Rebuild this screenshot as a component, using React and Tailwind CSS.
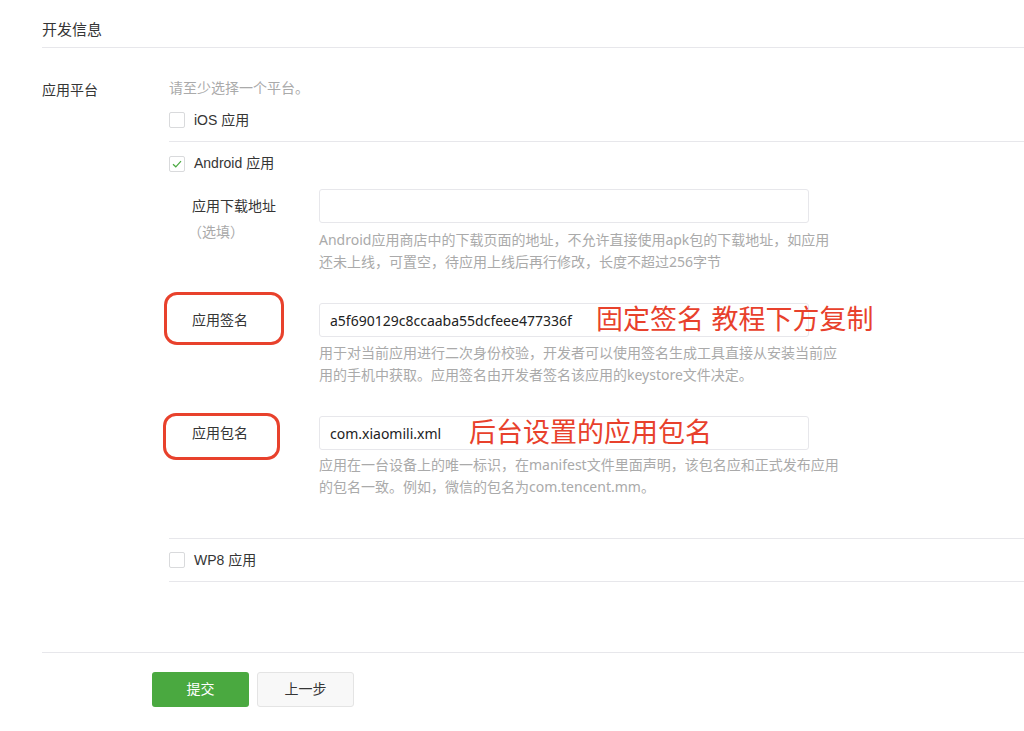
import React from 'react';

const font = { fontFamily: '"Liberation Sans", "Noto Sans CJK SC", sans-serif' };
const helpFont = { fontFamily: '"Noto Sans", "Noto Sans CJK SC", sans-serif' };

function Checkbox({ checked }) {
    return (
        <span className="w-4 h-4 border border-[#d9dadc] rounded-[2px] bg-white flex items-center justify-center shrink-0">
            {checked && (
                <svg width="10" height="8" viewBox="0 0 10 8" fill="none">
                    <path d="M1 4.2 L3.8 6.8 L9 1.2" stroke="#4aa940" strokeWidth="1.2" />
                </svg>
            )}
        </span>
    );
}

function Help({ children, className = '' }) {
    return (
        <p className={`text-[14px] leading-[22px] text-[#aaaaaa] w-[521px] ${className}`} style={helpFont}>
            {children}
        </p>
    );
}

function SubRow({ label, extra, value, children, mark, note }) {
    return (
        <div className="relative flex">
            {mark}
            <div className="w-[150px] pl-[23px] shrink-0">
                <div className="text-[14px] leading-[34px] text-[#353535]">{label}</div>
                {extra && <div className="text-[14px] leading-[18px] text-[#aaaaaa] -ml-[4px]">{extra}</div>}
            </div>
            <div>
                <div className="relative w-[490px] h-[34px] border border-[#e7e7eb] rounded-[3px] bg-white px-[10px] flex items-center text-[14px] text-[#222]">
                    <span style={helpFont}>{value}</span>
                    {note}
                </div>
                {children}
            </div>
        </div>
    );
}

export default function App() {
    return (
        <div className="min-h-screen bg-white" style={font}>
            <div className="pl-[42px]">
                {/* 标题 */}
                <div className="pt-[19px] pb-[6px] border-b border-[#e7e7eb] text-[15px] leading-[22px] text-[#353535]">
                    开发信息
                </div>

                <div className="flex mt-[29px]">
                    <div className="w-[127px] shrink-0 pt-[2px] text-[14px] leading-[22px] text-[#353535]">应用平台</div>
                    <div className="flex-1">
                        <p className="text-[14px] leading-[22px] text-[#aaaaaa]">请至少选择一个平台。</p>

                        <div className="h-[43px] flex items-center gap-[9px] border-b border-[#e7e7eb] text-[14px] text-[#353535]">
                            <Checkbox />
                            <span>iOS 应用</span>
                        </div>

                        <div className="pb-[40px] border-b border-[#e7e7eb]">
                            <div className="h-[43px] flex items-center gap-[9px] text-[14px] text-[#353535]">
                                <Checkbox checked />
                                <span>Android 应用</span>
                            </div>

                            <div className="mt-[4px]">
                                <SubRow label="应用下载地址" extra="（选填）" value="">
                                    <Help className="mt-[6px]">
                                        Android应用商店中的下载页面的地址，不允许直接使用apk包的下载地址，如应用还未上线，可置空，待应用上线后再行修改，长度不超过256字节
                                    </Help>
                                </SubRow>
                            </div>

                            <div className="mt-[30px]">
                                <SubRow
                                    label="应用签名"
                                    value="a5f690129c8ccaaba55dcfeee477336f"
                                    mark={<span className="absolute left-[-5px] top-[-11px] w-[120px] h-[53px] border-[3px] border-[#e8412c] rounded-[13px]" />}
                                    note={<span className="absolute left-[276px] top-1/2 -translate-y-1/2 text-[27px] leading-[34px] text-[#e8412c] whitespace-nowrap">固定签名 教程下方复制</span>}
                                >
                                    <Help className="mt-[5px]">
                                        用于对当前应用进行二次身份校验，开发者可以使用签名生成工具直接从安装当前应用的手机中获取。应用签名由开发者签名该应用的keystore文件决定。
                                    </Help>
                                </SubRow>
                            </div>

                            <div className="mt-[30px]">
                                <SubRow
                                    label="应用包名"
                                    value="com.xiaomili.xml"
                                    mark={<span className="absolute left-[-6px] top-[-3px] w-[117px] h-[47px] border-[3px] border-[#e8412c] rounded-[13px]" />}
                                    note={<span className="absolute left-[149px] top-1/2 -translate-y-1/2 text-[27px] leading-[34px] text-[#e8412c] whitespace-nowrap">后台设置的应用包名</span>}
                                >
                                    <Help className="mt-[4px]">
                                        应用在一台设备上的唯一标识，在manifest文件里面声明，该包名应和正式发布应用的包名一致。例如，微信的包名为com.tencent.mm。
                                    </Help>
                                </SubRow>
                            </div>
                        </div>

                        <div className="h-[43px] flex items-center gap-[9px] border-b border-[#e7e7eb] text-[14px] text-[#353535]">
                            <Checkbox />
                            <span>WP8 应用</span>
                        </div>
                    </div>
                </div>

                {/* 底部按钮 */}
                <div className="mt-[70px] border-t border-[#e7e7eb] pt-[19px] pl-[110px] flex gap-[8px]">
                    <button className="w-[97px] h-[35px] rounded-[3px] bg-[#4aa940] text-white text-[14px]">提交</button>
                    <button className="w-[97px] h-[35px] rounded-[3px] bg-[#f8f8f8] border border-[#e4e4e4] text-[#353535] text-[14px]">上一步</button>
                </div>
            </div>
        </div>
    );
}
